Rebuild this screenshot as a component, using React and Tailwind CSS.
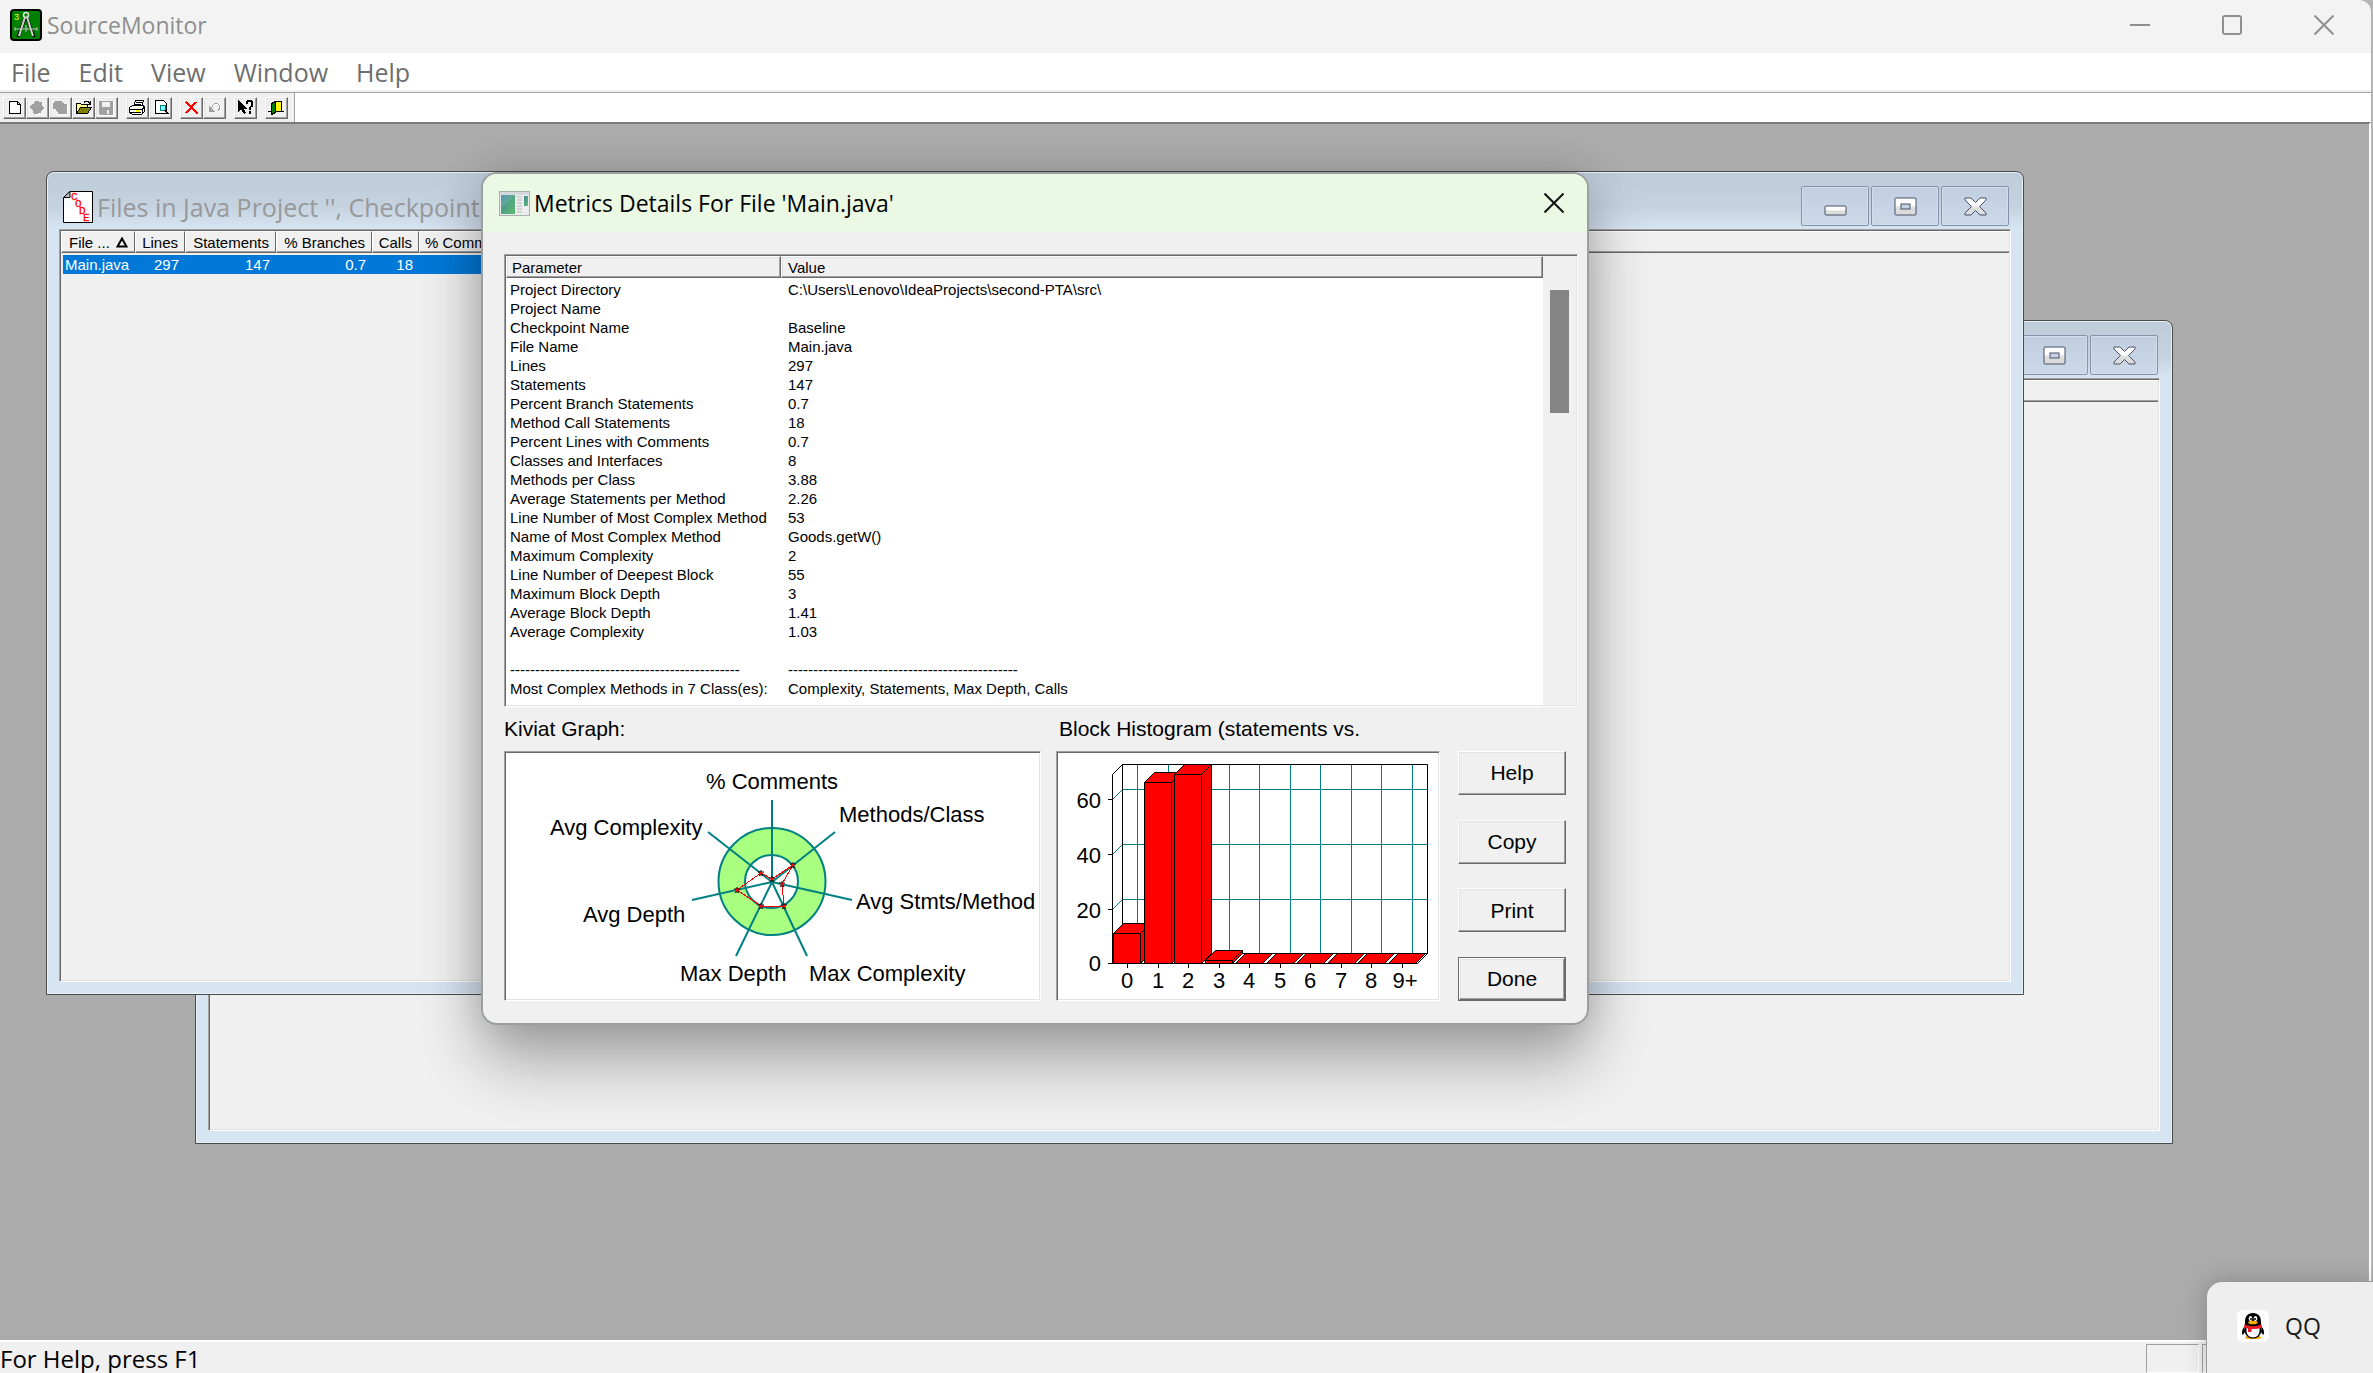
import clsx from "clsx";

const metrics = [
  ["Project Directory", "C:\\Users\\Lenovo\\IdeaProjects\\second-PTA\\src\\"],
  ["Project Name", ""],
  ["Checkpoint Name", "Baseline"],
  ["File Name", "Main.java"],
  ["Lines", "297"],
  ["Statements", "147"],
  ["Percent Branch Statements", "0.7"],
  ["Method Call Statements", "18"],
  ["Percent Lines with Comments", "0.7"],
  ["Classes and Interfaces", "8"],
  ["Methods per Class", "3.88"],
  ["Average Statements per Method", "2.26"],
  ["Line Number of Most Complex Method", "53"],
  ["Name of Most Complex Method", "Goods.getW()"],
  ["Maximum Complexity", "2"],
  ["Line Number of Deepest Block", "55"],
  ["Maximum Block Depth", "3"],
  ["Average Block Depth", "1.41"],
  ["Average Complexity", "1.03"],
  ["", ""],
  ["----------------------------------------------", "----------------------------------------------"],
  ["Most Complex Methods in 7 Class(es):", "Complexity, Statements, Max Depth, Calls"],
];

const uiFont = "font-['Open_Sans','Noto_Sans',sans-serif]";
const arial = "font-['Liberation_Sans',Arial,sans-serif]";

const sunken =
  "border border-t-[#a0a0a0] border-l-[#a0a0a0] border-r-white border-b-white p-px shadow-[inset_1px_1px_0_#696969,inset_-1px_-1px_0_#e3e3e3]";
const raised =
  "border border-t-white border-l-white border-r-[#696969] border-b-[#696969] shadow-[inset_-1px_-1px_0_#a0a0a0,inset_1px_1px_0_#e3e3e3]";

const AppLogo = () => (
  <svg className="size-8 shrink-0" viewBox="0 0 32 32">
    <rect x="1" y="1" width="30" height="30" rx="3" fill="#008000" stroke="#000" strokeWidth="2" />
    <text x="4" y="11" fontSize="9" fill="#ff0" fontFamily="Liberation Sans, sans-serif">3</text>
    <path d="M17 9 L24 28 M15 9 L8 28" stroke="#000" strokeWidth="3" />
    <path d="M17 8 L23 27 M15 8 L9 27" stroke="#d0d0d0" strokeWidth="2" />
    <circle cx="16" cy="6" r="2.5" fill="#008000" stroke="#e0e0e0" strokeWidth="1.5" />
    <path d="M5 20 H27 M5 18 v4 M27 18 v4 M16 16 v7" stroke="#c0c0c0" fill="none" />
  </svg>
);

const CodeIcon = () => (
  <svg className="h-8 w-[30px] shrink-0" viewBox="0 0 30 32">
    <path d="M7 .5 H29.5 V31.5 H.5 V7 Z" fill="#fff" stroke="#000" />
    <path d="M7 .5 V6.5 H.5 Z" fill="#c0c0c0" stroke="#000" />
    <g fill="#f00" fontSize="11" fontFamily="Liberation Mono, monospace" stroke="#f00" strokeWidth=".3">
      <text x="8" y="9">C</text>
      <text x="12" y="16">O</text>
      <text x="16" y="23">D</text>
      <text x="20" y="30">E</text>
    </g>
  </svg>
);

const DialogIcon = () => (
  <svg className="h-[25px] w-[31px] shrink-0" viewBox="0 0 31 25">
    <defs>
      <linearGradient id="screen" x1="0" y1="0" x2="1" y2="1">
        <stop offset="0" stopColor="#3f86a8" />
        <stop offset="0.5" stopColor="#4fa383" />
        <stop offset="1" stopColor="#5fbb72" />
      </linearGradient>
    </defs>
    <rect x=".5" y=".5" width="30" height="24" fill="#ececec" stroke="#a9b0b0" />
    <rect x="1" y="1" width="29" height="3" fill="#d3d9dc" />
    <rect x="2" y="4" width="14" height="19" fill="url(#screen)" />
    <path d="M2 16 Q9 13 16 4 V4 H2 Z" fill="#fff" opacity=".12" />
    <path d="M18 6 h5 M18 9 h5 M18 12 h5 M18 15 h5 M18 18 h5 M18 21 h5" stroke="#b8bcbc" />
    <rect x="25" y="5" width="4" height="10" fill="url(#screen)" />
  </svg>
);

const toolGroups = [
  [
    {
      name: "New",
      icon: (
        <path d="M6.5 4.5 h8 l3 3 v9 h-11 Z M14.5 4.5 v3 h3" fill="#fff" stroke="#000" />
      ),
    },
    {
      name: "Add checkpoint",
      icon: (
        <>
          <path d="M12 5 l3 1 3 3 1 3 -3 3 -4 3 -4 -3 -4 -4 4 -3 1 -2 Z" fill="#fff" />
          <path d="M10 4 h2 l1 1 h3 v4 l2 2 -3 3 v2 h-2 l-2 1 h-2 l-2 -1 v-2 l-4 -4 h1 l2 -3 h2 v-2 Z" fill="#a0a0a0" />
        </>
      ),
    },
    {
      name: "Copy checkpoint",
      icon: (
        <>
          <path d="M7 14 v2 l2 2 h10 v-9 l-1 -1 Z" fill="#fff" />
          <path d="M6 4 h7 l2 3 h3 v10 h-9 v-2 l-2 -1 v-2 h-3 v-6 Z" fill="#a0a0a0" />
        </>
      ),
    },
    {
      name: "Open",
      icon: (
        <>
          <path d="M4.5 15.5 v-9 h4 l1 1 h6 v3" fill="#ffff8c" stroke="#000" />
          <path d="M4.5 16.5 l4 -6 h11 l-4 6 Z" fill="#808000" stroke="#000" />
          <path d="M12 5.500 q3 -3 6 1 M18.500 4 v3.500 h-3" fill="none" stroke="#000" />
        </>
      ),
    },
    {
      name: "Save",
      icon: (
        <>
          <path d="M6 18.500 h12.500 V5" fill="none" stroke="#fff" />
          <path d="M4 4 h14 v14 h-13 l-1 -1 Z" fill="#a0a0a0" />
          <rect x="7" y="5" width="8" height="5" fill="#f0f0f0" />
          <rect x="12" y="13" width="2" height="4" fill="#f0f0f0" />
        </>
      ),
    },
  ],
  [
    {
      name: "Print",
      icon: (
        <>
          <path d="M7.500 9.500 l2 -6 h8 l-2 6 Z" fill="#fff" stroke="#000" />
          <path d="M10 5.500 h6 M9 7.500 h6" stroke="#000" />
          <path d="M3.500 10.500 l3 -2 h11 l1 2 v4 l-3 3 h-9 l-3 -2 Z" fill="#fff" stroke="#000" />
          <path d="M4 12.500 h12 l2 -2 M4 15.500 h11 M16.500 12 v4" fill="none" stroke="#000" />
          <rect x="10" y="13" width="4" height="2" fill="#ff0" />
        </>
      ),
    },
    {
      name: "Print preview",
      icon: (
        <>
          <path d="M6.500 3.500 h8 l3 3 v10 h-11 Z" fill="#fff" stroke="#000" />
          <circle cx="14" cy="11" r="3" fill="#7ff" stroke="#008080" />
          <path d="M16 13 l3 4" stroke="#000" strokeWidth="2" />
        </>
      ),
    },
  ],
  [
    {
      name: "Delete",
      icon: (
        <path d="M6 5 L18 17 M16 5 L6 16" stroke="#f00" strokeWidth="2" fill="none" />
      ),
    },
    {
      name: "Undo",
      icon: (
        <>
          <path d="M8 13 q0 -6 5 -6 t4 6 l-2 2" fill="none" stroke="#fff" strokeWidth="2" />
          <path d="M8.500 12 q1 -6 5 -6 q5 2 2 8" fill="none" stroke="#a0a0a0" />
          <path d="M6 9 v6 h6 Z" fill="#a0a0a0" />
        </>
      ),
    },
  ],
  [
    {
      name: "Context help",
      icon: (
        <>
          <path d="M4 3 v12 l3 -3 3 5 2 -1 -2 -4 h4 Z" fill="#000" />
          <path d="M12.500 7 q0 -3 3 -3 t3 3 q0 2 -3 4 v1.500 M15.500 14 v3" fill="none" stroke="#000" strokeWidth="2" />
        </>
      ),
    },
  ],
  [
    {
      name: "Exit",
      icon: (
        <>
          <path d="M3 14.500 h16" stroke="#000" />
          <rect x="9.500" y="4.500" width="7" height="10" fill="#ff0" stroke="#000" />
          <path d="M6.500 6.500 l4 -2 v11 l-4 2 Z" fill="#008000" stroke="#000" />
        </>
      ),
    },
  ],
];

const Toolbar = () => (
  <div className="flex h-[30px] border-t border-[#a0a0a0] bg-white">
    <div className="flex items-center gap-2 border-r border-[#a0a0a0] bg-[#f0f0f0] pl-[3px] pr-1.5">
      {toolGroups.map((group) => (
        <div key={group[0].name} className="flex">
          {group.map((tool) => (
            <button key={tool.name} type="button" aria-label={tool.name} className={clsx("h-[22px] w-[23px]", raised)}>
              <svg className="-m-px h-[22px] w-[23px]" viewBox="0 0 23 22" shapeRendering="crispEdges">
                {tool.icon}
              </svg>
            </button>
          ))}
        </div>
      ))}
    </div>
  </div>
);

const captionIcons = {
  Minimize: <rect x="1" y="9" width="21" height="9" rx="1" fill="url(#cap)" stroke="#4b5066" />,
  Maximize: (
    <>
      <rect x="1" y="1" width="21" height="17" rx="1" fill="url(#cap)" stroke="#4b5066" />
      <rect x="7" y="7" width="9" height="5" fill="#c5d3e4" stroke="#4b5066" />
    </>
  ),
  Close: (
    <path
      d="M1 1 H7 L11.500 5.500 L16 1 H22 V3 L15.500 9.500 L22 16 V18 H16 L11.500 13.500 L7 18 H1 V16 L7.500 9.500 L1 3 Z"
      fill="url(#cap)"
      stroke="#4b5066"
    />
  ),
};

const CaptionButton = ({ name }) => (
  <button
    type="button"
    aria-label={name}
    className="flex h-10 w-[68px] items-center justify-center rounded-[2px] border border-[#8492ad] bg-gradient-to-b from-[#c0cee0] to-[#cbd9e9] shadow-[inset_0_0_0_1px_#d3dfec]"
  >
    <svg className="h-[19px] w-[23px]" viewBox="0 0 23 19">
      <defs>
        <linearGradient id="cap" x1="0" y1="0" x2="0" y2="1">
          <stop offset="0.4" stopColor="#fff" />
          <stop offset="0.6" stopColor="#dcdcdc" />
        </linearGradient>
      </defs>
      {captionIcons[name]}
    </svg>
  </button>
);

const ChildWindow = ({ title, icon, className, children }) => (
  <section
    className={clsx(
      "absolute flex h-[824px] w-[1978px] flex-col rounded-t-lg border border-[#4a4a4a] bg-[#d7e4f2] px-3 pb-3 shadow-[inset_0_0_0_1px_#e8f0f8]",
      className
    )}
  >
    <header className="-mx-[11px] mt-px flex h-14 shrink-0 items-center justify-between rounded-t-md bg-gradient-to-b from-[#bfcddb] from-10% via-[#c5d3e1] via-60% to-[#d7e4f2] pl-[15px] pr-[13px]">
      <div className={clsx("flex items-center gap-1 pt-3 text-[25px] leading-8 text-[#999]", uiFont)}>
        {icon}
        <h2 className="whitespace-nowrap">{title}</h2>
      </div>
      <div className="flex gap-0.5 pt-2.5">
        <CaptionButton name="Minimize" />
        <CaptionButton name="Maximize" />
        <CaptionButton name="Close" />
      </div>
    </header>
    <div className={clsx("flex-1 bg-[#f0f0f0]", sunken)}>{children}</div>
  </section>
);

const headCell = "border-l border-l-white border-r border-r-[#696969] p-0 font-normal";

const FileTable = () => (
  <table className={clsx("w-full table-fixed border-separate border-spacing-0 text-[15px] leading-[19px]", arial)}>
    <colgroup>
      <col className="w-[74px]" />
      <col className="w-[50px]" />
      <col className="w-[91px]" />
      <col className="w-[96px]" />
      <col className="w-[47px]" />
      <col className="w-[112px]" />
      <col />
    </colgroup>
    <thead>
      <tr className="h-[22px] text-right whitespace-nowrap text-black [&>th]:border-t [&>th]:border-t-white [&>th]:border-b [&>th]:border-b-[#696969] [&>th]:shadow-[inset_0_-1px_0_#a0a0a0]">
        <th className={headCell}>
          <span className="flex items-center justify-between pl-[7px] pr-1.5">
            File ...
            <svg className="h-[11px] w-3" viewBox="0 0 12 11">
              <path d="M6 1.500 L10.500 9.500 H1.500 Z" fill="none" stroke="#000" strokeWidth="2" />
            </svg>
          </span>
        </th>
        <th className={clsx(headCell, "pr-1.5")}>Lines</th>
        <th className={clsx(headCell, "pr-1.5")}>Statements</th>
        <th className={clsx(headCell, "pr-1.5")}>% Branches</th>
        <th className={clsx(headCell, "pr-1.5")}>Calls</th>
        <th className={clsx(headCell, "pl-[5px] text-left")}>% Comments</th>
        <th aria-label="Other" className="p-0" />
      </tr>
      <tr aria-hidden="true" className="h-0.5">
        <td colSpan={7} className="p-0" />
      </tr>
    </thead>
    <tbody>
      <tr className="text-right text-white [&>td]:p-0">
        <td>
          <div className="ml-0.5 bg-[#0078d7] pl-0.5 text-left">Main.java</div>
        </td>
        <td><div className="bg-[#0078d7] pr-1.5">297</div></td>
        <td><div className="bg-[#0078d7] pr-1.5">147</div></td>
        <td><div className="bg-[#0078d7] pr-1.5">0.7</div></td>
        <td><div className="bg-[#0078d7] pr-1.5">18</div></td>
        <td><div className="h-[19px] bg-[#0078d7]" /></td>
        <td />
      </tr>
    </tbody>
  </table>
);

const axes = [
  { label: "% Comments", x: 200, y: 36, ex: 266, ey: 47, px: 266, py: 126 },
  { label: "Methods/Class", x: 333, y: 69, ex: 329, ey: 79, px: 287, py: 112 },
  { label: "Avg Stmts/Method", x: 350, y: 156, ex: 346, ey: 147, px: 276, py: 131 },
  { label: "Max Complexity", x: 303, y: 228, ex: 301, ey: 203, px: 278, py: 153 },
  { label: "Max Depth", x: 174, y: 228, ex: 230, ey: 203, px: 255, py: 153 },
  { label: "Avg Depth", x: 77, y: 169, ex: 186, ey: 147, px: 231, py: 137 },
  { label: "Avg Complexity", x: 44, y: 82, ex: 202, ey: 79, px: 255, py: 120 },
];

const KiviatGraph = () => (
  <svg className="h-[246px] w-[533px]" viewBox="0 0 533 246" role="img" aria-label="Kiviat graph">
    <circle cx="266" cy="128.500" r="53.500" fill="#a8ff80" stroke="#008080" strokeWidth="2" />
    <circle cx="265.500" cy="128.500" r="26.500" fill="#fff" stroke="#008080" strokeWidth="2" />
    {axes.map((a) => (
      <line key={a.label} x1="266" y1="129" x2={a.ex} y2={a.ey} stroke="#008080" strokeWidth="2" />
    ))}
    <polygon
      points={axes.map((a) => `${a.px},${a.py}`).join(" ")}
      fill="none"
      stroke="#f00"
      shapeRendering="crispEdges"
    />
    {axes.map((a) => (
      <g key={a.label}>
        <path d={`M${a.px - 3} ${a.py - 1} h6 M${a.px} ${a.py - 3} v6 M${a.px - 2} ${a.py + 3} l2 -3 l2 3`} stroke="#000" fill="none" />
        <circle cx={a.px} cy={a.py} r="1.500" fill="#f00" />
        <text x={a.x} y={a.y} fontSize="22">{a.label}</text>
      </g>
    ))}
  </svg>
);

// height is the drawn column height in pixels
const bars = [
  { label: "0", height: 30 },
  { label: "1", height: 181 },
  { label: "2", height: 189 },
  { label: "3", height: 3 },
  { label: "4", height: 0 },
  { label: "5", height: 0 },
  { label: "6", height: 0 },
  { label: "7", height: 0 },
  { label: "8", height: 0 },
  { label: "9+", height: 0 },
];

const BlockHistogram = () => (
  <svg className="h-[246px] w-[380px]" viewBox="0 0 380 246" role="img" aria-label="Block histogram">
    <g fill="none" stroke="#008080">
      {bars.map((b, i) => (
        <path key={b.label} d={`M${79.5 + Math.round(i * 30.5)} 11 V200`} />
      ))}
      {[36.5, 91.5, 146.5].map((y) => (
        <path key={y} d={`M54.500 ${y + 10} L64.500 ${y} H369`} />
      ))}
    </g>
    <path d="M54.500 210.500 V21.500 L64.500 11.500 H369.500 V200.500 L359.500 210.500 H50 M64.500 11.500 V200.500 H369.500" fill="none" stroke="#000" />
    <g fill="#f00" stroke="#000" strokeLinejoin="round">
      {bars.map((b, i) => {
        const x = 55.5 + Math.round(i * 30.5);
        const y = 210.5 - b.height;
        return (
          <g key={b.label}>
            <path d={`M${x} ${y} l10 -10 h27 l-10 10 Z`} />
            {b.height > 0 && (
              <>
                <path d={`M${x + 27} ${y} l10 -10 v${b.height} l-10 10 Z`} />
                <rect x={x} y={y} width="27" height={b.height} />
              </>
            )}
          </g>
        );
      })}
    </g>
    <g fontSize="22" textAnchor="middle">
      {bars.map((b, i) => (
        <g key={b.label}>
          <path d={`M${69.5 + Math.round(i * 30.5)} 210 v5`} stroke="#000" />
          <text x={(b.label === "9+" ? 72 : 69) + Math.round(i * 30.5)} y="235">{b.label}</text>
        </g>
      ))}
    </g>
    <g fontSize="22" textAnchor="end">
      {["60", "40", "20", "0"].map((t, i) => (
        <g key={t}>
          <path d={`M50 ${46.5 + i * 55 - (i === 3 ? 1 : 0)} h5`} stroke="#000" />
          <text x="43" y={55 + i * 55 - (i === 3 ? 2 : 0)}>{t}</text>
        </g>
      ))}
    </g>
  </svg>
);

const DialogButton = ({ children, isDefault }) => (
  <button
    type="button"
    className={clsx("h-11 bg-[#f0f0f0]", isDefault && "border border-[#696969]")}
  >
    <span className={clsx("flex h-full items-center justify-center", raised)}>{children}</span>
  </button>
);

const MetricsDialog = () => (
  <section
    role="dialog"
    aria-labelledby="metrics-title"
    className={clsx(
      "absolute left-[481px] top-12 w-[1108px] overflow-hidden rounded-[16px] border-2 border-[#9c9f9f] bg-[#f0f0f0] text-[21px] text-black shadow-[0_36px_64px_rgba(0,0,0,0.32),0_0_40px_rgba(0,0,0,0.12)]",
      arial
    )}
  >
    <header className={clsx("flex h-[58px] items-center gap-1 bg-[#ebf8e4] pl-4 pr-[23px]", uiFont)}>
      <DialogIcon />
      <h2 id="metrics-title" className="flex-1 text-[23px] leading-8">Metrics Details For File 'Main.java'</h2>
      <button type="button" aria-label="Close">
        <svg className="size-5" viewBox="0 0 20 20">
          <path d="M.500 .500 L19.500 19.500 M19.500 .500 L.500 19.500" stroke="#111" strokeWidth="2" />
        </svg>
      </button>
    </header>

    <div className="pb-[22px] pl-[21px] pt-[22px]">
      <div className={clsx("mr-[9px] flex h-[453px] bg-white", sunken)}>
        <table className="table-fixed flex-1 self-start border-separate border-spacing-0 text-left text-[15px] leading-[19px]">
          <colgroup>
            <col className="w-[275px]" />
            <col />
          </colgroup>
          <thead>
            <tr className="h-[22px] bg-[#f0f0f0]">
              <th className={clsx("py-0 pl-[5px] pr-0 font-normal", raised)}>Parameter</th>
              <th className={clsx("py-0 pl-1.5 pr-0 font-normal", raised)}>Value</th>
            </tr>
            <tr aria-hidden="true" className="h-0.5">
              <td colSpan={2} className="p-0" />
            </tr>
          </thead>
          <tbody>
            {metrics.map(([name, value], i) => (
              <tr key={i} className="h-[19px] whitespace-nowrap">
                <td className="py-0 pl-1 pr-0">{name}</td>
                <td className="py-0 pl-[7px] pr-0">{value}</td>
              </tr>
            ))}
          </tbody>
        </table>
        <div className="w-[33px] bg-[#f0f0f0] px-[7px] pt-[34px]">
          <div className="h-[123px] bg-[#858585]" />
        </div>
      </div>

      <div className="flex gap-[15px]">
        <div>
          <h3 className="flex h-11 items-center">Kiviat Graph:</h3>
          <div className={clsx("bg-white", sunken)}>
            <KiviatGraph />
          </div>
        </div>
        <div>
          <h3 className="flex h-11 items-center pl-[3px]">Block Histogram (statements vs.</h3>
          <div className={clsx("bg-white", sunken)}>
            <BlockHistogram />
          </div>
        </div>
        <div className="ml-[3px] mt-11 flex w-[108px] flex-col justify-between">
          <DialogButton>Help</DialogButton>
          <DialogButton>Copy</DialogButton>
          <DialogButton>Print</DialogButton>
          <DialogButton isDefault>Done</DialogButton>
        </div>
      </div>
    </div>
  </section>
);

const Penguin = () => (
  <svg className="size-8" viewBox="0 0 32 32">
    <rect width="32" height="32" rx="6" fill="#fff" />
    <path d="M8 27 q3 -3 8 -1 q5 -2 8 1 q0 2 -4 2 h-8 q-4 0 -4 -2 Z" fill="#faab07" />
    <path d="M7 17 Q4 21 5.500 25 Q7 24 8 22 Z M25 17 Q28 21 26.500 25 Q25 24 24 22 Z" fill="#000" />
    <path d="M16 3 C10.500 3 8 6.500 8 12 C8 16 7 18 7.500 21 C8.500 26 12 28.500 16 28.500 C20 28.500 23.500 26 24.500 21 C25 18 24 16 24 12 C24 6.500 21.500 3 16 3 Z" fill="#000" />
    <path d="M9.500 17 Q8.500 27.500 16 27.500 Q23.500 27.500 22.500 17 Z" fill="#fff" />
    <ellipse cx="13.500" cy="8.500" rx="1.800" ry="2.600" fill="#fff" />
    <ellipse cx="18.500" cy="8.500" rx="1.800" ry="2.600" fill="#fff" />
    <circle cx="14" cy="9" r="1" />
    <circle cx="18" cy="9" r="1" />
    <ellipse cx="16" cy="12.500" rx="4.800" ry="1.800" fill="#faab07" />
    <path d="M7.500 14.500 Q16 18 24.500 14.500 L25 17.500 Q20 19.500 14.500 19 V22 H11 V18.500 Q8.500 18 7 17.500 Z" fill="#eb1923" />
  </svg>
);

const App = () => (
  <div className={clsx("relative flex h-screen flex-col overflow-hidden bg-[#b4b4b4] pr-0.5 text-[#6e6e6e]", uiFont)}>
    <header className="flex h-[53px] shrink-0 items-center justify-between rounded-tr-xl bg-[#f3f3f3] pl-2.5 text-[#8f8f8f]">
      <div className="flex items-center gap-[5px] pb-1">
        <AppLogo />
        <h1 className="text-[23px] leading-8">SourceMonitor</h1>
      </div>
      <div className="flex gap-[72px] pb-1 pr-[37px]">
        <button type="button" aria-label="Minimize">
          <svg className="size-5" viewBox="0 0 20 20"><path d="M0 10 H20" stroke="#8f8f8f" strokeWidth="2" /></svg>
        </button>
        <button type="button" aria-label="Maximize">
          <svg className="size-5" viewBox="0 0 20 20">
            <rect x="1" y="1" width="18" height="18" rx="2" fill="none" stroke="#8f8f8f" strokeWidth="2" />
          </svg>
        </button>
        <button type="button" aria-label="Close">
          <svg className="size-5" viewBox="0 0 20 20">
            <path d="M.500 .500 L19.500 19.500 M19.500 .500 L.500 19.500" stroke="#8f8f8f" strokeWidth="2" />
          </svg>
        </button>
      </div>
    </header>

    <nav className="flex h-[39px] shrink-0 items-center gap-7 border-b-2 border-[#f0f0f0] bg-white pl-[11px] text-[25px] leading-8">
      <button type="button">File</button>
      <button type="button">Edit</button>
      <button type="button">View</button>
      <button type="button">Window</button>
      <button type="button">Help</button>
    </nav>

    <Toolbar />

    <main className="relative flex-1 overflow-hidden border-r-2 border-t-2 border-r-white border-t-[#7a7a7a] bg-[#ababab]">
      <ChildWindow className="left-[195px] top-[196px]">
        <div className="h-[22px] border-b border-t border-b-[#696969] border-t-white shadow-[inset_0_-1px_0_#a0a0a0]" />
      </ChildWindow>
      <ChildWindow title="Files in Java Project '', Checkpoint" icon={<CodeIcon />} className="left-[46px] top-[47px]">
        <FileTable />
      </ChildWindow>
      <MetricsDialog />
    </main>

    <footer className="flex h-[33px] shrink-0 items-end justify-between border-t-2 border-white bg-[#f0f0f0] text-black">
      <span className="text-[24px] leading-7">For Help, press F1</span>
      <div className="flex h-[29px] gap-[3px]">
        <div className="w-[53px] border border-b-white border-l-[#a0a0a0] border-r-white border-t-[#a0a0a0]" />
        <div className="w-[169px] border border-b-white border-l-[#a0a0a0] border-r-white border-t-[#a0a0a0]" />
      </div>
    </footer>

    <aside className="absolute bottom-0 right-0 flex h-[92px] w-[167px] items-center gap-4 rounded-tl-2xl border-l border-t border-[#9a9a9a] bg-[#eeeeee] pb-1 pl-[30px] text-[23px] leading-8 text-[#1a1a1a] shadow-[0_0_24px_rgba(0,0,0,0.2)]">
      <Penguin />
      QQ
    </aside>
  </div>
);

export default App;
